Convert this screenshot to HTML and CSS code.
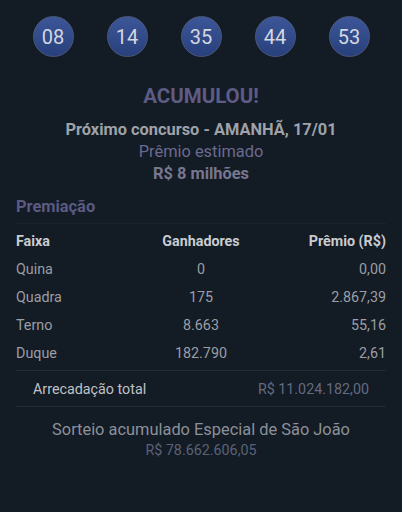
FILE: index.html
```html
<!DOCTYPE html>
<html lang="pt-BR">
<head>
    <meta charset="UTF-8">
    <meta name="viewport" content="width=device-width, initial-scale=1.0">
    <title>Resultado Quina</title>
    <link rel="stylesheet" href="styles.css">
</head>
<body>
    <div class="balls">
        <span class="ball">08</span>
        <span class="ball">14</span>
        <span class="ball">35</span>
        <span class="ball">44</span>
        <span class="ball">53</span>
    </div>

    <div class="summary">
        <h2 class="status">ACUMULOU!</h2>
        <p class="next">Próximo concurso - AMANHÃ, 17/01</p>
        <p class="estimate-label">Prêmio estimado</p>
        <p class="estimate">R$ 8 milhões</p>
    </div>

    <!-- Prize table -->
    <section class="prizes">
        <h3 class="section-title">Premiação</h3>
        <div class="table">
            <div class="row head">
                <span>Faixa</span>
                <span class="mid">Ganhadores</span>
                <span class="right">Prêmio (R$)</span>
            </div>
            <div class="row">
                <span>Quina</span>
                <span class="mid">0</span>
                <span class="right">0,00</span>
            </div>
            <div class="row">
                <span>Quadra</span>
                <span class="mid">175</span>
                <span class="right">2.867,39</span>
            </div>
            <div class="row">
                <span>Terno</span>
                <span class="mid">8.663</span>
                <span class="right">55,16</span>
            </div>
            <div class="row">
                <span>Duque</span>
                <span class="mid">182.790</span>
                <span class="right">2,61</span>
            </div>
        </div>

        <div class="total">
            <span>Arrecadação total</span>
            <span class="total-value">R$ 11.024.182,00</span>
        </div>
    </section>

    <div class="special">
        <p class="special-label">Sorteio acumulado Especial de São João</p>
        <p class="special-value">R$ 78.662.606,05</p>
    </div>
</body>
</html>
```

FILE: styles.css
```css
body {
    font-family: Roboto, "Noto Sans", sans-serif;
    background-color: #131b25;
    margin: 0;
    padding: 0;
    height: 512px;
    overflow: hidden;
}

p, h2, h3 {
    margin: 0;
}

.balls {
    display: flex;
    justify-content: center;
    gap: 33px;
    padding-top: 16px;
}

.ball {
    width: 39px;
    height: 39px;
    border-radius: 50%;
    border: 1px solid #4a5778;
    background: linear-gradient(#3c5698, #28407c);
    color: #d3d7e0;
    font-size: 20px;
    display: flex;
    align-items: center;
    justify-content: center;
}

.summary {
    text-align: center;
    padding-top: 25px;
}

.status {
    font-size: 20.5px;
    font-weight: bold;
    color: #5e5c84;
    line-height: 28px;
}

.next {
    margin-top: 10px;
    font-size: 16.4px;
    font-weight: bold;
    color: #9fa2a8;
    line-height: 20px;
}

.estimate-label {
    margin-top: 1px;
    font-size: 16.4px;
    color: #6b6a8e;
    line-height: 21px;
}

.estimate {
    font-size: 16.4px;
    font-weight: bold;
    color: #77778f;
    line-height: 23px;
}

.prizes {
    padding: 0 16px;
    margin-top: 11px;
}

.section-title {
    font-size: 16.4px;
    font-weight: bold;
    color: #5b5a82;
    line-height: 22px;
    padding-bottom: 5px;
    border-bottom: 1px solid #1a232d;
}

.table {
    padding-top: 3px;
}

.row {
    display: grid;
    grid-template-columns: 1fr 1fr 1fr;
    font-size: 14.3px;
    line-height: 28px;
    color: #9b9ea4;
}

.row.head {
    font-weight: bold;
    color: #c9cbcf;
}

.mid {
    text-align: center;
}

.right {
    text-align: right;
}

.total {
    display: flex;
    justify-content: space-between;
    margin-top: 3px;
    padding: 2px 17px 0;
    font-size: 14.3px;
    line-height: 33px;
    border-top: 1px solid #222b35;
    border-bottom: 1px solid #222b35;
}

.total span:first-child {
    color: #bfc2c6;
}

.total-value {
    color: #646a80;
}

.special {
    text-align: center;
    padding-top: 12px;
}

.special-label {
    font-size: 16.4px;
    color: #8c9098;
    line-height: 21px;
}

.special-value {
    font-size: 14.3px;
    color: #5b6276;
    line-height: 21px;
}
```
